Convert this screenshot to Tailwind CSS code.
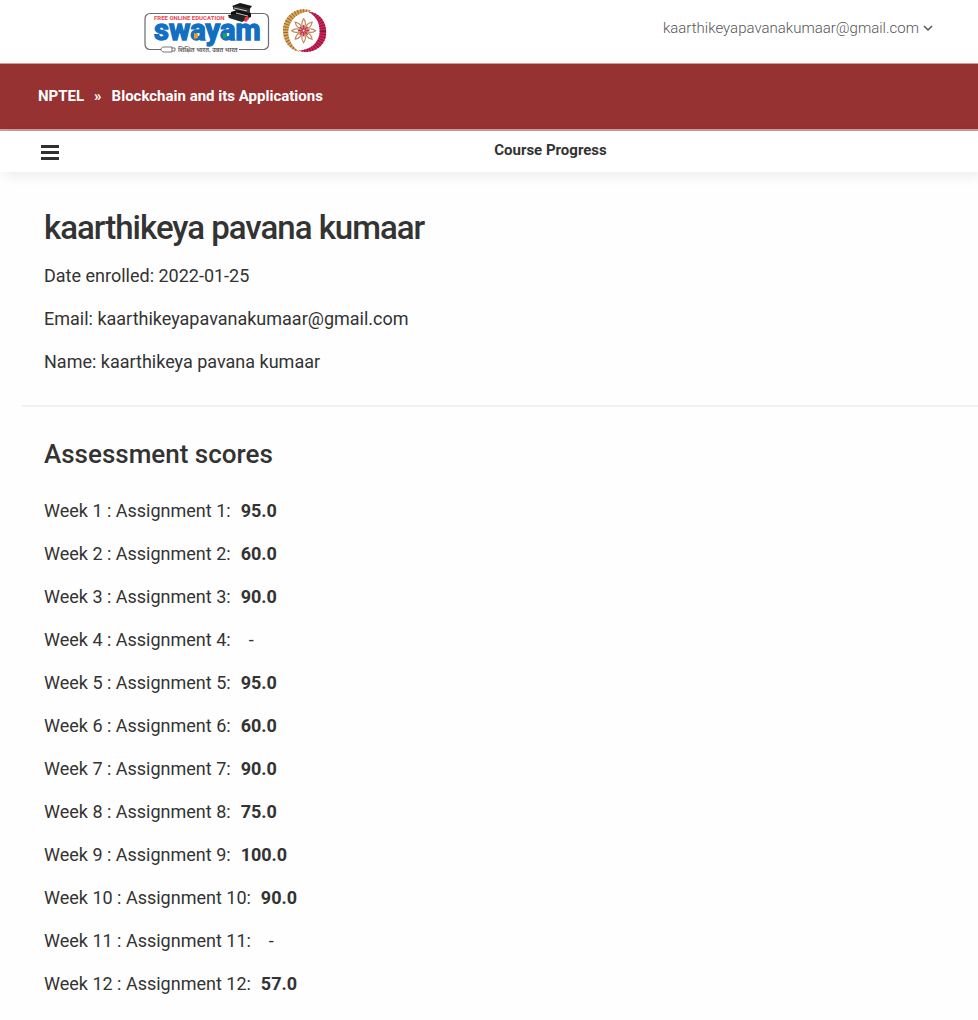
<!DOCTYPE html>
<html lang="en">
<head>
<meta charset="utf-8">
<meta name="viewport" content="width=device-width, initial-scale=1">
<title>Course Progress</title>
<script src="https://cdn.jsdelivr.net/npm/@tailwindcss/browser@4"></script>
</head>
<body class="min-h-screen bg-[#fefefe] font-['Roboto',sans-serif] text-[#333]">
<header class="flex h-[63px] items-start justify-between bg-white pr-[45px] pl-36">
  <div class="flex gap-[9px]">
    <a href="#" aria-label="Swayam">
      <svg class="h-14 w-[127px]" viewBox="0 0 127 56">
        <rect x="1" y="13.500" width="123.500" height="36" rx="5" fill="#fff" stroke="#6b6b6b" stroke-width="1.200"/>
        <path d="M19 49.500h76" stroke="#fff" stroke-width="3"/>
        <text x="10" y="20" font-family="Roboto" font-size="6" font-weight="700" fill="#ee4550">FREE ONLINE EDUCATION</text>
        <text x="10" y="40" font-family="Roboto" font-size="29" font-weight="700" fill="#126fc1" stroke="#126fc1" stroke-width="1.400">swayam</text>
        <path d="M50 33l4 1v4l-4 1z" fill="#f39a22"/><path d="M79 33l4 1v3l-4 2z" fill="#18a557"/>
        <path d="M20 47h8v5h-8c-4 0-4-5 0-5zM28 48h3v3h-3" fill="#fff" stroke="#555" stroke-width=".8"/>
        <text x="34" y="52" font-family="Noto Sans" font-size="6" font-weight="700" fill="#666">शिक्षित भारत, उन्नत भारत</text>
        <path d="M88 6l8-3 12 3-3 4-13-1z" fill="#171717"/>
        <path d="M89 7l4-1 13 3v4l-13-2-4-2z" fill="#333"/>
        <path d="M87 12l6-2 14 3v4l-5 2-15-4z" fill="#111"/>
        <path d="M84 15l9-1 12 4-7 4-13-4z" fill="#242424"/>
        <path d="M92 13l12 3M90 8l13 3" stroke="#eee" stroke-width=".8"/>
        <path d="M101 17l3-1 1 3-3 3-2-1z" fill="#e63947"/>
      </svg>
    </a>
    <a href="#" aria-label="NPTEL">
      <svg class="mt-1 h-[52px] w-[50px]" viewBox="0 0 150 156">
        <defs>
          <clipPath id="gold"><path d="M97 22C60 2 9 30 9 80C9 112 30 138 58 143C36 128 23 105 25 80C28 48 55 21 97 22Z"/></clipPath>
          <clipPath id="red"><path d="M84 23C118 24 139 52 139 85C139 125 100 155 56 140C93 138 117 115 119 85C120 55 107 35 84 23Z"/></clipPath>
          <g id="petal" fill="none" stroke-width="3.500"><path d="M71 75C63 63 66 51 71 44C76 51 79 63 71 75Z" stroke="#c08a62"/><path d="M71 79V63" stroke="#c9304d" stroke-width="4"/></g>
        </defs>
        <g clip-path="url(#gold)"><path d="M0 0h150v156H0z" fill="#dda658"/><circle cx="76" cy="80" r="56" fill="none" stroke="#8d652f" stroke-width="34" stroke-dasharray="2.500 5.500"/></g>
        <g clip-path="url(#red)"><path d="M0 0h150v156H0z" fill="#dc2058"/><circle cx="71" cy="82" r="58" fill="none" stroke="#78203c" stroke-width="34" stroke-dasharray="2.800 5"/></g>
        <use href="#petal"/><use href="#petal" transform="rotate(45 71 80)"/><use href="#petal" transform="rotate(90 71 80)"/><use href="#petal" transform="rotate(135 71 80)"/><use href="#petal" transform="rotate(180 71 80)"/><use href="#petal" transform="rotate(225 71 80)"/><use href="#petal" transform="rotate(270 71 80)"/><use href="#petal" transform="rotate(315 71 80)"/>
        <circle cx="71" cy="80" r="4" fill="#fff" stroke="#c9304d" stroke-width="3"/>
      </svg>
    </a>
  </div>
  <button type="button" class="mt-[18px] flex items-center gap-1 text-[15px] leading-5 font-light text-[#555]">kaarthikeyapavanakumaar@gmail.com
    <svg class="h-2.5 w-2.5" viewBox="0 0 10 10" fill="none" stroke="#555" stroke-width="1.500"><path d="M1 3l4 4 4-4"/></svg>
  </button>
</header>
<nav aria-label="Breadcrumb" class="flex h-[68px] items-center gap-[10px] border-t border-b-2 border-[#cf9c9c] bg-[#963232] px-[38px] pb-px text-[15px] leading-5 font-bold text-white">
  <a href="#">NPTEL</a><span>»</span><a href="#">Blockchain and its Applications</a>
</nav>
<div class="flex h-[41px] bg-white shadow-[4px_4px_12px_rgba(0,0,0,0.07)]">
  <div class="w-[123px] shrink-0 pt-[14px] pl-[41px]">
    <button type="button" aria-label="Open menu" class="block"><svg class="h-4 w-[18px]" viewBox="0 0 18 16" fill="#303030"><path d="M0 0h18v3H0zM0 6h18v3H0zM0 12h18v3H0z"/></svg></button>
  </div>
  <div class="flex-1 pt-[9px] text-center text-[15px] leading-5 font-bold">Course Progress</div>
</div>
<main>
  <section class="px-11 pt-9">
    <h1 class="text-[33px] leading-10 font-medium tracking-[-1px]">kaarthikeya pavana kumaar</h1>
    <div class="mt-4 space-y-[19px] text-[18px] leading-6">
      <p>Date enrolled: 2022-01-25</p>
      <p>Email: kaarthikeyapavanakumaar@gmail.com</p>
      <p>Name: kaarthikeya pavana kumaar</p>
    </div>
  </section>
  <hr class="mt-[31px] ml-[22px] border-t-2 border-[#f1f1f1]">
  <section class="px-11 pt-[27px] pb-4">
    <h2 class="text-[26px] leading-10 font-medium">Assessment scores</h2>
    <ul class="mt-[25px] space-y-[19px] text-[18px] leading-6">
      <li class="flex gap-[10px]"><span>Week 1 : Assignment 1:</span><b>95.0</b></li>
      <li class="flex gap-[10px]"><span>Week 2 : Assignment 2:</span><b>60.0</b></li>
      <li class="flex gap-[10px]"><span>Week 3 : Assignment 3:</span><b>90.0</b></li>
      <li class="flex gap-[18px]"><span>Week 4 : Assignment 4:</span><span>-</span></li>
      <li class="flex gap-[10px]"><span>Week 5 : Assignment 5:</span><b>95.0</b></li>
      <li class="flex gap-[10px]"><span>Week 6 : Assignment 6:</span><b>60.0</b></li>
      <li class="flex gap-[10px]"><span>Week 7 : Assignment 7:</span><b>90.0</b></li>
      <li class="flex gap-[10px]"><span>Week 8 : Assignment 8:</span><b>75.0</b></li>
      <li class="flex gap-[10px]"><span>Week 9 : Assignment 9:</span><b>100.0</b></li>
      <li class="flex gap-[10px]"><span>Week 10 : Assignment 10:</span><b>90.0</b></li>
      <li class="flex gap-[18px]"><span>Week 11 : Assignment 11:</span><span>-</span></li>
      <li class="flex gap-[10px]"><span>Week 12 : Assignment 12:</span><b>57.0</b></li>
    </ul>
  </section>
</main>
</body>
</html>
